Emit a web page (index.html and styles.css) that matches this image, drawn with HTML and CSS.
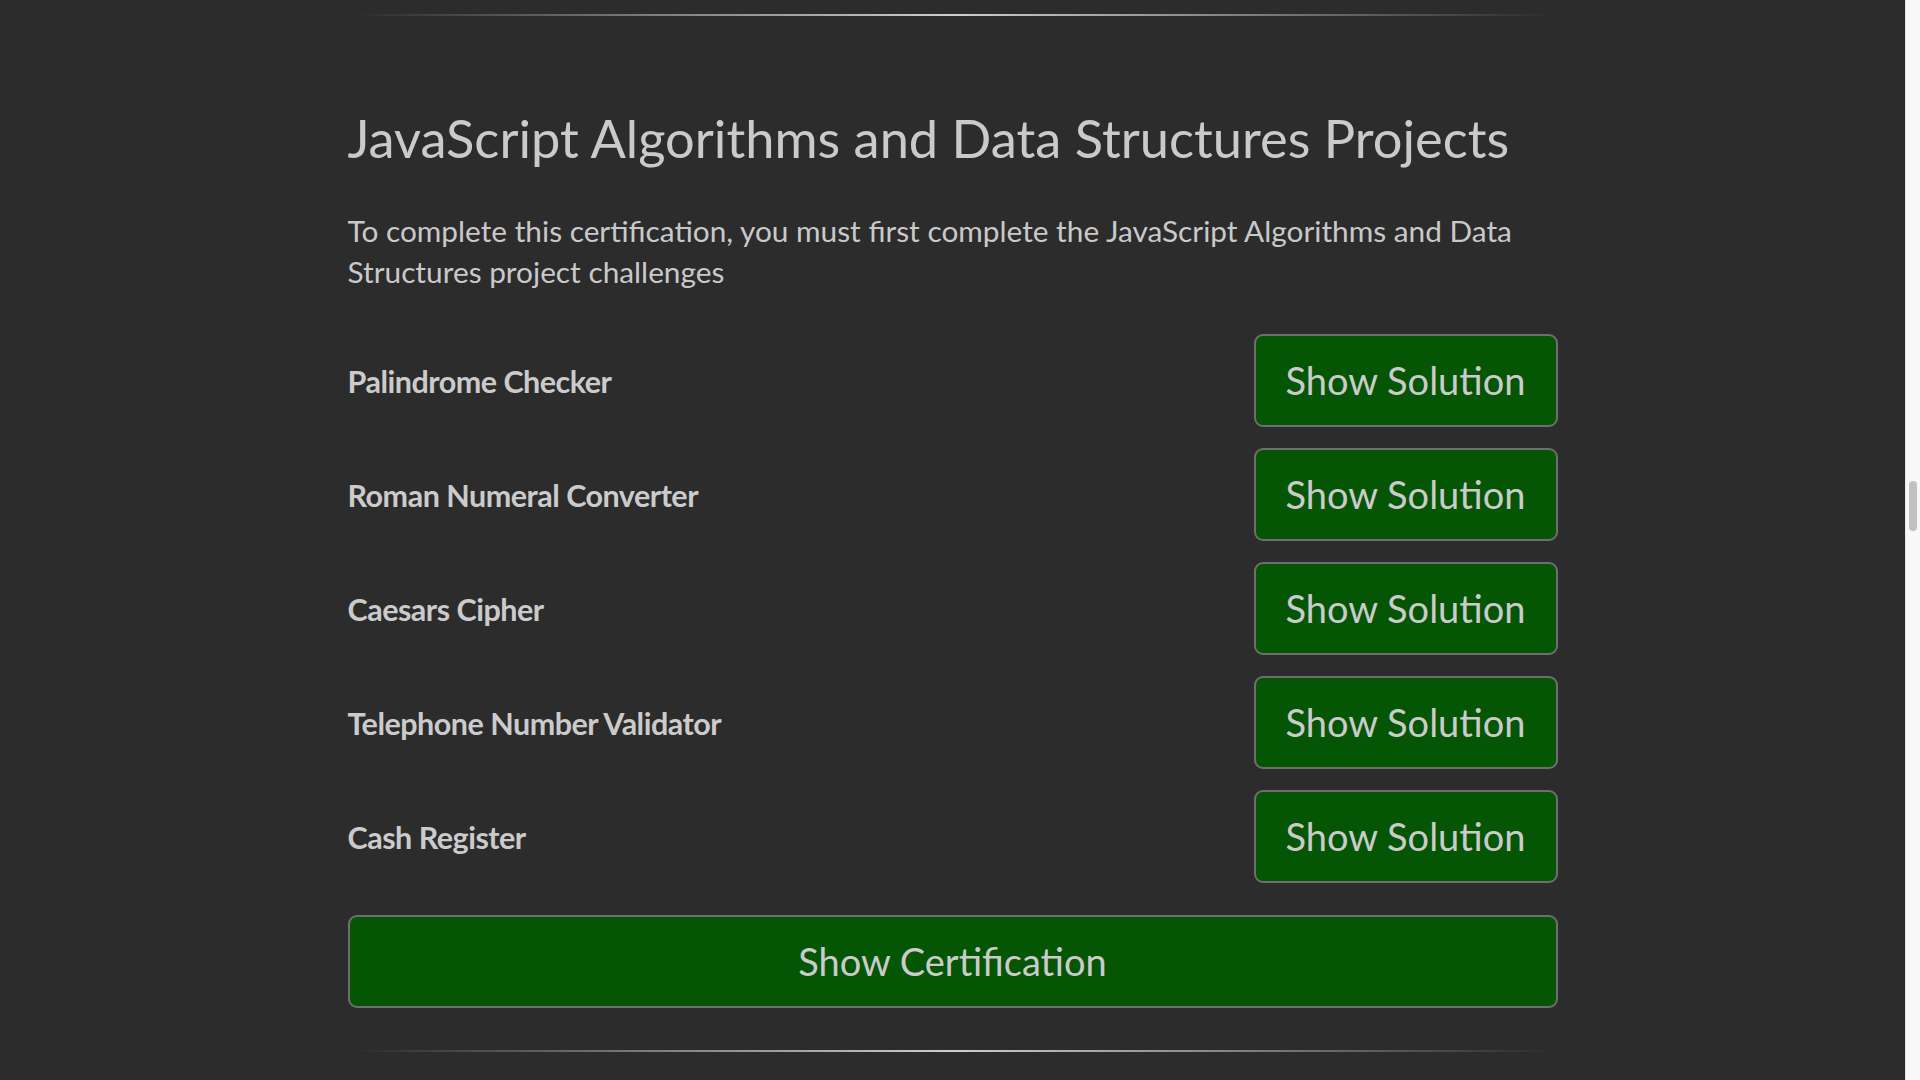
FILE: index.html
```html
<!DOCTYPE html>
<html lang="en">
<head>
<meta charset="utf-8">
<title>JavaScript Algorithms and Data Structures Projects</title>
<link rel="stylesheet" href="styles.css">
</head>
<body>
<div class="page">
  <main class="main">
    <div class="column">
      <hr class="divider divider-top">
      <section class="projects">
        <h2 class="title">JavaScript Algorithms and Data Structures Projects</h2>
        <p class="intro">To complete this certification, you must first complete the JavaScript Algorithms and Data Structures project challenges</p>
        <ul class="list">
          <li class="row"><span class="name">Palindrome Checker</span><button class="btn btn-solution">Show Solution</button></li>
          <li class="row"><span class="name">Roman Numeral Converter</span><button class="btn btn-solution">Show Solution</button></li>
          <li class="row"><span class="name">Caesars Cipher</span><button class="btn btn-solution">Show Solution</button></li>
          <li class="row"><span class="name">Telephone Number Validator</span><button class="btn btn-solution">Show Solution</button></li>
          <li class="row"><span class="name">Cash Register</span><button class="btn btn-solution">Show Solution</button></li>
        </ul>
        <button class="btn btn-cert">Show Certification</button>
      </section>
      <hr class="divider divider-bottom">
    </div>
  </main>
  <aside class="scrollbar"><div class="thumb"></div></aside>
</div>
</body>
</html>
```

FILE: styles.css
```css
html, body {
  margin: 0;
  padding: 0;
  height: 100%;
  overflow: hidden;
}
body {
  background: #2c2c2c;
  color: #c9c9c9;
  font-family: Lato, "Noto Sans", sans-serif;
}
.page {
  display: flex;
  height: 100vh;
}
.main {
  flex: 1;
  overflow: hidden;
}
.column {
  width: 1210px;
  margin: 0 auto;
  padding-top: 14px;
}
.divider {
  border: 0;
  height: 2px;
  margin: 0 6px;
  background: linear-gradient(to right, rgba(204,204,204,0), #cfcfcf 50%, rgba(204,204,204,0));
}
.title {
  margin: 91px 0 0;
  font-size: 52.4px;
  font-weight: 400;
  line-height: 62px;
  color: #cacaca;
  letter-spacing: 0;
}
.intro {
  margin: 41px 0 0;
  font-size: 29.8px;
  line-height: 41px;
  letter-spacing: 0;
  color: #c9c9c9;
}
.list {
  list-style: none;
  margin: 42px 0 0;
  padding: 0;
  display: flex;
  flex-direction: column;
  gap: 21px;
}
.row {
  display: flex;
  align-items: center;
  justify-content: space-between;
  height: 93px;
}
.name {
  font-size: 30.5px;
  font-weight: 700;
  letter-spacing: -0.5px;
  color: #cbcbcb;
}
.btn {
  font-family: Lato, "Noto Sans", sans-serif;
  font-size: 38px;
  line-height: 45px;
  color: #cbcbcb;
  background: #045504;
  border: 2px solid #6e6e6e;
  border-radius: 9px;
  padding: 22px 0;
  cursor: pointer;
}
.btn-solution {
  width: 304px;
}
.btn-cert {
  display: block;
  width: 100%;
  margin-top: 32px;
  padding: 22px 0;
}
.divider-bottom {
  margin-top: 42px;
}
.scrollbar {
  width: 14px;
  flex: none;
  background: #f8f8f8;
  border-left: 1px solid #e6e6e6;
}
.thumb {
  width: 8px;
  height: 50px;
  margin: 481px 0 0 3px;
  border-radius: 4px;
  background: #c1c1c1;
}
```
